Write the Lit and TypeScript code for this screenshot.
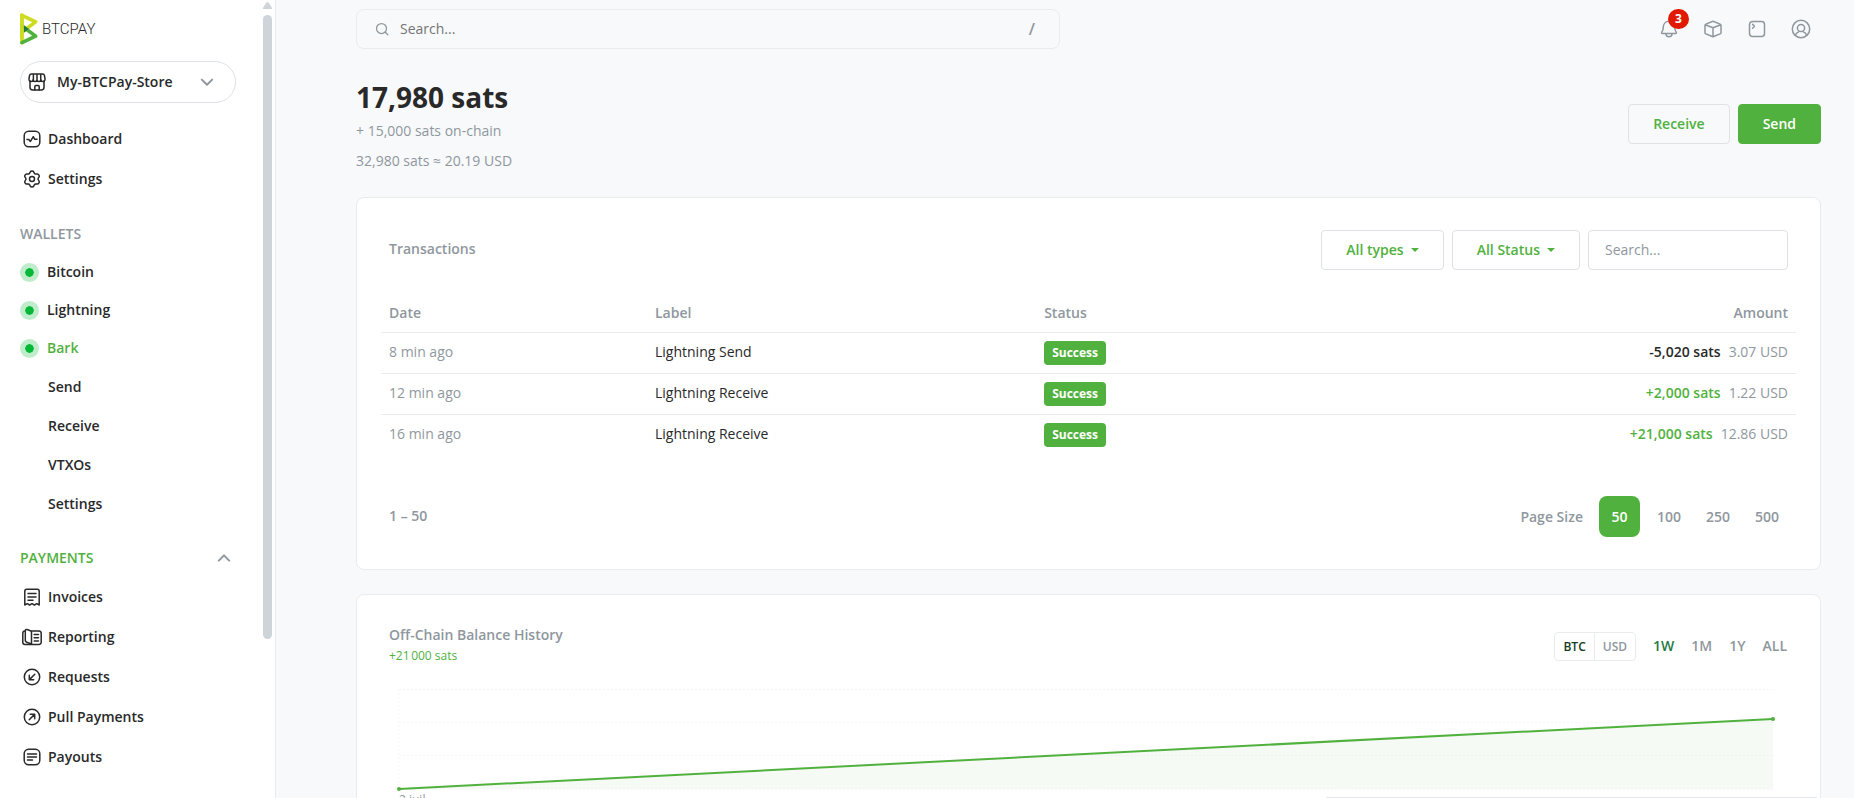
import { LitElement, html, css, svg, nothing } from "lit";
import { customElement, property } from "lit/decorators.js";
import { classMap } from "lit/directives/class-map.js";

const icons: Record<string, unknown> = {
  store: svg`<path d="M5 11v6.3A2.7 2.7 0 0 0 7.700 20h8.600a2.700 2.700 0 0 0 2.700-2.700V11"/><path d="M6.500 4h11a2 2 0 0 1 2 1.600l.5 3.200c.2 1.500-.8 2.700-2.100 2.700-1.200 0-2-.9-2-2 0 1.100-.8 2-2 2s-1.900-.9-1.900-2c0 1.100-.8 2-1.900 2s-2-.9-2-2c0 1.100-.9 2-2.100 2-1.300 0-2.200-1.200-2-2.700l.5-3.200a2 2 0 0 1 2-1.600zM8.400 4.200v5.300M12 4.200v5.300M15.700 4.200v5.300M9.800 20v-3.500a1 1 0 0 1 1-1h2.400a1 1 0 0 1 1 1V20"/>`,
  dashboard: svg`<rect x="4.200" y="4.200" width="15.600" height="15.600" rx="4.500"/><path d="M7 12.500h1.800l1.600 1.900 2.900-4.700 1.500 2.600H17"/>`,
  settings: svg`<circle cx="12" cy="12" r="2.500"/><path d="M10.300 4.900 C10.800 3.800 13.200 3.800 13.700 4.900 L14.300 6.100 C14.600 6.700 15.300 7.100 16 7 L17.400 6.900 C18.600 6.900 19.800 8.900 19.100 9.900 L18.300 11.100 C17.900 11.700 17.900 12.400 18.300 12.900 L19.100 14.100 C19.800 15.100 18.600 17.100 17.400 17.100 L16 17 C15.300 16.900 14.600 17.300 14.300 17.900 L13.700 19.100 C13.200 20.200 10.800 20.200 10.300 19.100 L9.700 17.900 C9.400 17.300 8.700 16.900 8 17 L6.600 17.100 C5.400 17.100 4.200 15.100 4.900 14.100 L5.700 12.900 C6.100 12.400 6.100 11.700 5.700 11.100 L4.900 9.900 C4.200 8.900 5.400 6.900 6.600 6.900 L8 7 C8.700 7.100 9.400 6.700 9.700 6.100 Z"/>`,
  invoices: svg`<path d="M4.800 20V6.200a2 2 0 0 1 2-2h10.400a2 2 0 0 1 2 2V20l-2.400-1.300-2.400 1.300-2.400-1.300-2.400 1.300-2.400-1.300zM8 8.500h8M8 12h8M8 15.300h5"/>`,
  reporting: svg`<path d="M11.500 6H19a2.200 2.200 0 0 1 2.200 2.200v9A2.200 2.200 0 0 1 19 19.400H5a2.200 2.200 0 0 1-2.200-2.200v-9A2.200 2.200 0 0 1 5 6"/><path d="M11.500 19V7.200a1.600 1.600 0 0 0-1.100-1.500L7 4.500A1.300 1.300 0 0 0 5.300 5.800v9.600a2 2 0 0 0 1.300 1.800L11.500 19M14.200 9.500h4.300M14.200 12.700h4.300M14.200 15.900h4.300"/>`,
  requests: svg`<circle cx="12" cy="12" r="7.700"/><path d="m14.800 9.200-5.400 5.400M9.300 10.300v4.400h4.400"/>`,
  pull: svg`<circle cx="12" cy="12" r="7.700"/><path d="m9.200 14.800 5.400-5.400M10.300 9.300h4.400v4.400"/>`,
  payouts: svg`<rect x="4.200" y="4.200" width="15.600" height="15.600" rx="4.500"/><path d="M7.500 9h9M7.500 12h9M7.500 15h5"/>`,
  search: svg`<circle cx="11.500" cy="11.500" r="5"/><path d="m15.300 15.300 2.500 2.500"/>`,
  bell: svg`<path d="M5.300 16.500c-.6 0-.9-.6-.6-1.100.8-1.100 1.500-2.400 1.500-4.600 0-3.800 2.300-6.500 5.800-6.500s5.800 2.700 5.800 6.500c0 2.200.7 3.500 1.500 4.600.3.500 0 1.100-.6 1.100zM9 16.800a3 3 0 0 0 6 0"/>`,
  box: svg`<path d="M4 8.300c0-.6.400-1 .9-1.200L11.300 4.500a2 2 0 0 1 1.400 0l6.400 2.600c.5.200.9.600.9 1.200v7.400c0 .6-.4 1-.9 1.200l-6.400 2.600a2 2 0 0 1-1.400 0l-6.400-2.600c-.5-.2-.9-.6-.9-1.200zM4.200 7.800 12 10.700l7.800-2.900M12 10.700v8.900"/>`,
  terminal: svg`<rect x="4.500" y="4.500" width="15" height="15" rx="3"/><path d="m7.600 7.400 1.900 1.900-1.900 1.900"/>`,
  user: svg`<circle cx="12" cy="12" r="8.700"/><circle cx="12" cy="11" r="3.600"/><path d="M6.200 18.300c.9-2 2.300-3.200 3.800-3.700M17.800 18.300c-.9-2-2.300-3.200-3.800-3.700"/>`,
  down: svg`<path d="m6.800 9.600 5.200 5.200 5.200-5.200"/>`,
  up: svg`<path d="m6.800 14.600 5.200-5.200 5.200 5.200"/>`,
};

@customElement("app-icon")
class AppIcon extends LitElement {
  @property() name = "";

  static styles = css`
    :host { display: inline-flex; flex: none; width: 24px; height: 24px; }
    .glyph {
      width: 100%; height: 100%; fill: none; stroke: currentColor;
      stroke-width: var(--icon-stroke, 1.5); stroke-linecap: round; stroke-linejoin: round;
    }
  `;

  render() {
    return html`<svg class="glyph" viewBox="0 0 24 24" aria-hidden="true">${icons[this.name]}</svg>`;
  }
}

@customElement("app-sidebar")
class AppSidebar extends LitElement {
  static styles = css`
    :host {
      display: flex; flex: none; width: 276px; box-sizing: border-box; overflow: hidden;
      background: #fff; border-right: 1px solid #e9ecef; color: #292929;
    }
    .body { flex: 1; min-width: 0; padding: 13px 0 0 20px; }
    .logo { display: flex; align-items: center; gap: 4px; height: 32px; color: #292929; text-decoration: none; font: 300 15px Roboto, sans-serif; }
    .mark { width: 18px; height: 32px; }
    .store {
      display: flex; align-items: center; width: 216px; height: 42px; margin: 16px 0;
      padding: 0 16px 0 4px; border: 1px solid #dee2e6; border-radius: 21px;
      background: #fff; color: inherit; font: inherit; font-weight: 600; text-align: left;
    }
    .store .label { flex: 1; padding-left: 8px; }
    .chevron { color: #8f979e; --icon-stroke: 2; }
    .list { list-style: none; margin: 0; padding: 0; }
    .link { display: flex; align-items: center; gap: 4px; height: 40px; color: inherit; font-weight: 600; text-decoration: none; }
    .wallet { height: 38px; gap: 8px; }
    .sub { height: 39px; padding-left: 28px; }
    .active, .heading.active { color: #51b13e; }
    .dot { width: 9px; height: 9px; border: 5px solid #bfedcb; border-radius: 50%; background: #02b836; background-clip: padding-box; }
    .heading {
      display: flex; align-items: center; justify-content: space-between; height: 30px;
      margin: 20px 0 4px; padding: 0 27px 0 0; font-size: 14px; font-weight: 600; color: #8f979e;
    }
    .track { display: flex; flex-direction: column; gap: 6px; width: 9px; padding: 2px 3px 0 0; }
    .arrow { width: 9px; height: 7px; fill: #ced4da; }
    .thumb { height: 78.4%; border-radius: 5px; background: #ced4da; }
  `;

  private item(icon: string, label: string) {
    return html`<li><a class="link" href="#"><app-icon name=${icon}></app-icon>${label}</a></li>`;
  }

  private wallet(label: string, active = false) {
    return html`<li><a class=${classMap({ link: true, wallet: true, active })} href="#"><span class="dot"></span>${label}</a></li>`;
  }

  render() {
    return html`
      <nav class="body" aria-label="Main">
        <a class="logo" href="#">
          <svg class="mark" viewBox="0 0 48 84" aria-hidden="true">
            <path fill="#cedc21" d="M5.206 83.433a4.860 4.860 0 01-4.859-4.861V5.431a4.860 4.860 0 119.719 0v73.141a4.861 4.861 0 01-4.860 4.861"/>
            <path fill="#51b13e" d="M5.209 83.433a4.862 4.862 0 01-2.086-9.253L32.430 60.274 2.323 38.093a4.861 4.861 0 015.766-7.826l36.647 26.999a4.864 4.864 0 01-.799 8.306L7.289 82.964a4.866 4.866 0 01-2.080.469"/>
            <path fill="#cedc21" d="M5.211 54.684a4.860 4.860 0 01-2.887-8.774L32.430 23.730 3.123 9.821a4.861 4.861 0 014.166-8.784l36.648 17.394a4.860 4.860 0 01.799 8.305l-36.647 27a4.844 4.844 0 01-2.878.948"/>
            <path fill="#1e7a44" d="M10.066 31.725v20.553L24.010 42.006z"/>
            <path fill="#cedc21" d="M10.066 5.431A4.861 4.861 0 005.206.570 4.860 4.860 0 00.347 5.431v61.165h9.720V5.431z"/>
          </svg>
          BTCPAY
        </a>
        <button class="store" type="button">
          <app-icon name="store"></app-icon><span class="label">My-BTCPay-Store</span><app-icon class="chevron" name="down"></app-icon>
        </button>
        <ul class="list">
          ${this.item("dashboard", "Dashboard")} ${this.item("settings", "Settings")}
        </ul>
        <h2 class="heading">WALLETS</h2>
        <ul class="list">
          ${this.wallet("Bitcoin")} ${this.wallet("Lightning")} ${this.wallet("Bark", true)}
          ${["Send", "Receive", "VTXOs", "Settings"].map((label) => html`<li><a class="link sub" href="#">${label}</a></li>`)}
        </ul>
        <h2 class="heading active">PAYMENTS<app-icon class="chevron" name="up"></app-icon></h2>
        <ul class="list">
          ${this.item("invoices", "Invoices")} ${this.item("reporting", "Reporting")}
          ${this.item("requests", "Requests")} ${this.item("pull", "Pull Payments")}
          ${this.item("payouts", "Payouts")}
        </ul>
      </nav>
      <div class="track" aria-hidden="true">
        <svg class="arrow" viewBox="0 0 9 7"><path d="M4.500 0q.6 0 1 .6L8.800 5.500Q9.500 7 8.200 7H.8Q-.5 7 .2 5.500L3.500.6q.4-.6 1-.6z"/></svg>
        <div class="thumb"></div>
      </div>
    `;
  }
}

interface Transaction {
  date: string;
  label: string;
  sats: string;
  usd: string;
  incoming: boolean;
}

@customElement("transactions-card")
class TransactionsCard extends LitElement {
  private rows: Transaction[] = [
    { date: "8 min ago", label: "Lightning Send", sats: "-5,020 sats", usd: "3.07 USD", incoming: false },
    { date: "12 min ago", label: "Lightning Receive", sats: "+2,000 sats", usd: "1.22 USD", incoming: true },
    { date: "16 min ago", label: "Lightning Receive", sats: "+21,000 sats", usd: "12.86 USD", incoming: true },
  ];

  static styles = css`
    :host { display: block; padding: 32px; background: #fff; border: 1px solid #e9ecef; border-radius: 8px; }
    .head { display: flex; align-items: center; gap: 8px; }
    .title { flex: 1; margin: 0; padding-bottom: 2px; font-size: 14px; font-weight: 600; color: #8f979e; }
    .filter { display: grid; align-items: center; }
    .select, .caret { grid-area: 1 / 1; }
    .select {
      appearance: none; field-sizing: content; height: 40px; padding: 0 39px 0 24px;
      border: 1px solid #dee2e6; border-radius: 4px; background: #fff;
      color: #51b13e; font: inherit; font-weight: 600;
    }
    .caret { justify-self: end; width: 8px; height: 4px; margin-right: 25px; fill: #51b13e; pointer-events: none; }
    .search {
      box-sizing: border-box; width: 200px; height: 40px; padding: 0 16px 2px;
      border: 1px solid #dee2e6; border-radius: 4px; font: inherit; color: #292929;
    }
    .search::placeholder { color: #8f979e; }
    .wrap { margin: 24px -8px 40px; }
    .table { width: 100%; border-collapse: separate; border-spacing: 0; table-layout: fixed; }
    .table th, .table td { box-sizing: border-box; padding: 0 8px; text-align: left; border-bottom: 1px solid #e9ecef; }
    .table th { height: 39px; font-weight: 600; color: #8f979e; }
    .table td { height: 41px; padding-bottom: 2px; }
    .table .state { padding-bottom: 0; }
    .table tr:last-child td { border-bottom-color: transparent; }
    .table .date { width: 18.8%; }
    .table .label { width: 27.5%; }
    .table .amount { text-align: right; }
    .table .muted, .usd { color: #8f979e; }
    .badge { display: inline-block; padding: 0 8px; border-radius: 4px; background: #51b13e; color: #fff; font-size: 12px; line-height: 24px; font-weight: 700; }
    .sats { margin-right: 8px; font-weight: 600; }
    .incoming { color: #51b13e; }
    .pager { display: flex; align-items: center; justify-content: space-between; font-weight: 600; color: #8f979e; }
    .shown { padding-bottom: 2px; }
    .sizes { display: flex; align-items: center; gap: 9px; padding-right: 1px; }
    .caption { margin-right: 7px; }
    .size { padding: 0 8px; line-height: 41px; border: 0; border-radius: 8px; background: none; color: inherit; font-family: inherit; font-size: inherit; font-weight: inherit; }
    .size.current { min-width: 41px; background: #51b13e; color: #fff; }
  `;

  private filter(id: string, name: string, value: string) {
    return html`<span class="filter">
      <select class="select" id=${id} aria-label=${name}><option>${value}</option></select>
      <svg class="caret" viewBox="0 0 8 4" aria-hidden="true"><path d="M0 0h8L4 4z"/></svg>
    </span>`;
  }

  render() {
    return html`
      <div class="head">
        <h2 class="title">Transactions</h2>
        ${this.filter("types", "Type", "All types")} ${this.filter("status", "Status", "All Status")}
        <input class="search" type="text" placeholder="Search..." aria-label="Search transactions" />
      </div>
      <div class="wrap">
        <table class="table">
          <thead>
            <tr><th class="date">Date</th><th class="label">Label</th><th>Status</th><th class="amount">Amount</th></tr>
          </thead>
          <tbody>
            ${this.rows.map((row) => html`<tr>
              <td class="muted">${row.date}</td>
              <td>${row.label}</td>
              <td class="state"><span class="badge">Success</span></td>
              <td class="amount"><span class=${classMap({ sats: true, incoming: row.incoming })}>${row.sats}</span><span class="usd">${row.usd}</span></td>
            </tr>`)}
          </tbody>
        </table>
      </div>
      <div class="pager">
        <span class="shown">1 – 50</span>
        <div class="sizes">
          <span class="caption">Page Size</span>
          ${[50, 100, 250, 500].map((size) => html`<button type="button" class=${classMap({ size: true, current: size === 50 })}>${size}</button>`)}
        </div>
      </div>
    `;
  }
}

@customElement("balance-card")
class BalanceCard extends LitElement {
  static styles = css`
    :host { display: block; padding: 32px; background: #fff; border: 1px solid #e9ecef; border-radius: 8px; }
    .head { display: flex; align-items: center; gap: 17px; }
    .intro { flex: 1; }
    .title { margin: 0 0 4px; font-size: 14px; line-height: 16px; font-weight: 600; color: #8f979e; }
    .change { margin: 0; font-size: 12px; line-height: 18px; color: #51b13e; }
    .units { display: flex; border: 1px solid #e9ecef; border-radius: 4px; }
    .unit, .range { border: 0; background: none; font-family: inherit; font-weight: 600; color: #8f979e; }
    .unit { padding: 0 8px; font-size: 12px; line-height: 27px; }
    .unit + .unit { border-left: 1px solid #e9ecef; }
    .unit.current { color: #0f3b21; }
    .ranges { display: flex; gap: 17px; padding-right: 1px; }
    .range { padding: 0; font-size: 14px; line-height: 22px; }
    .range.current { color: #1e7a44; }
    .chart { margin: 24px 15px 0 10px; }
    .plot { display: block; width: 100%; height: 100px; overflow: visible; }
    .plot * { vector-effect: non-scaling-stroke; }
    .grid { fill: none; stroke: rgba(0, 0, 0, 0.03); stroke-dasharray: 2 2; }
    .area { fill: rgba(81, 177, 62, 0.06); }
    .line { fill: none; stroke: #51b13e; stroke-width: 2; }
    .point { stroke: #51b13e; stroke-width: 4; stroke-linecap: round; }
    .tick { font-size: 12px; line-height: 22px; color: #8f979e; }
  `;

  render() {
    return html`
      <div class="head">
        <div class="intro">
          <h2 class="title">Off-Chain Balance History</h2>
          <p class="change">+21\u202f000 sats</p>
        </div>
        <div class="units">
          <button class="unit current" type="button">BTC</button><button class="unit" type="button">USD</button>
        </div>
        <div class="ranges">
          ${["1W", "1M", "1Y", "ALL"].map((range) => html`<button type="button" class=${classMap({ range: true, current: range === "1W" })}>${range}</button>`)}
        </div>
      </div>
      <div class="chart">
        <svg class="plot" viewBox="0 0 100 100" preserveAspectRatio="none" role="img" aria-label="Off-chain balance over one week">
          <path class="area" d="M0 100 100 30V100z"/>
          <path class="grid" d="M0 .5H100M0 33.500H100M0 66.500H100M0 100.500H100M0 0V100"/>
          <path class="line" d="M0 100 100 30"/>
          <path class="point" d="M0 100h.001M100 30h.001"/>
        </svg>
        <div class="tick">2 juil.</div>
      </div>
    `;
  }
}

@customElement("app-root")
class AppRoot extends LitElement {
  static styles = css`
    :host {
      display: flex; height: 100vh; overflow: hidden; background: #f8f9fb; color: #292929;
      font: 14px/22px "Open Sans", "Noto Sans", sans-serif;
    }
    .main { flex: 1; min-width: 0; padding: 9px 33px 0 80px; }
    .topbar { display: flex; align-items: center; justify-content: space-between; gap: 24px; }
    .search {
      display: flex; align-items: center; gap: 6px; flex: 1; max-width: 704px; height: 40px;
      box-sizing: border-box; padding: 0 24px 0 13px; border: 1px solid #e9ecef; border-radius: 8px; color: #8f979e;
      --icon-stroke: 1.25;
    }
    .field { flex: 1; min-width: 0; padding: 0; border: 0; outline: 0; background: none; font: inherit; color: #292929; }
    .field::placeholder { color: #757575; }
    .key { font: inherit; font-size: 16px; font-weight: 600; }
    .tools { display: flex; gap: 20px; padding-right: 8px; }
    .tool { position: relative; display: flex; padding: 0; border: 0; background: none; color: #8f979e; }
    .count {
      position: absolute; top: -8px; left: 11px; width: 21px; height: 20px; border-radius: 10px;
      background: #e11900; color: #fff; font: 700 12px/20px "Open Sans", sans-serif; text-align: center;
    }
    .summary { display: flex; align-items: center; gap: 8px; margin: 27px 0 25px; }
    .balance { flex: 1; }
    .total { margin: 0 0 2px; font-size: 28px; line-height: 42px; font-weight: 700; }
    .note { margin: 0; color: #8f979e; }
    .note + .note { margin-top: 8px; }
    .action { height: 40px; padding: 0 24px; border: 1px solid #dee2e6; border-radius: 4px; background: none; color: #51b13e; font: inherit; font-weight: 600; }
    .primary { border-color: #51b13e; background: #51b13e; color: #fff; }
    .cards { display: grid; gap: 24px; }
    .sheet { position: fixed; right: 37px; bottom: 0; width: 491px; height: 1px; background: #e4e8ec; }
  `;

  private tool(icon: string, name: string, count?: number) {
    return html`<button class="tool" type="button" aria-label=${name}>
      <app-icon name=${icon}></app-icon>${count ? html`<span class="count">${count}</span>` : nothing}
    </button>`;
  }

  render() {
    return html`
      <app-sidebar></app-sidebar>
      <main class="main">
        <header class="topbar">
          <label class="search">
            <app-icon name="search"></app-icon>
            <input class="field" type="text" placeholder="Search..." aria-label="Search" />
            <kbd class="key">/</kbd>
          </label>
          <div class="tools">
            ${this.tool("bell", "Notifications", 3)} ${this.tool("box", "Plugins")}
            ${this.tool("terminal", "Server")} ${this.tool("user", "Account")}
          </div>
        </header>
        <section class="summary">
          <div class="balance">
            <h1 class="total">17,980 sats</h1>
            <p class="note">+ 15,000 sats on-chain</p>
            <p class="note">32,980 sats ≈ 20.19 USD</p>
          </div>
          <button class="action" type="button">Receive</button>
          <button class="action primary" type="button">Send</button>
        </section>
        <div class="cards">
          <transactions-card></transactions-card>
          <balance-card></balance-card>
        </div>
      </main>
      <div class="sheet"></div>
    `;
  }
}
